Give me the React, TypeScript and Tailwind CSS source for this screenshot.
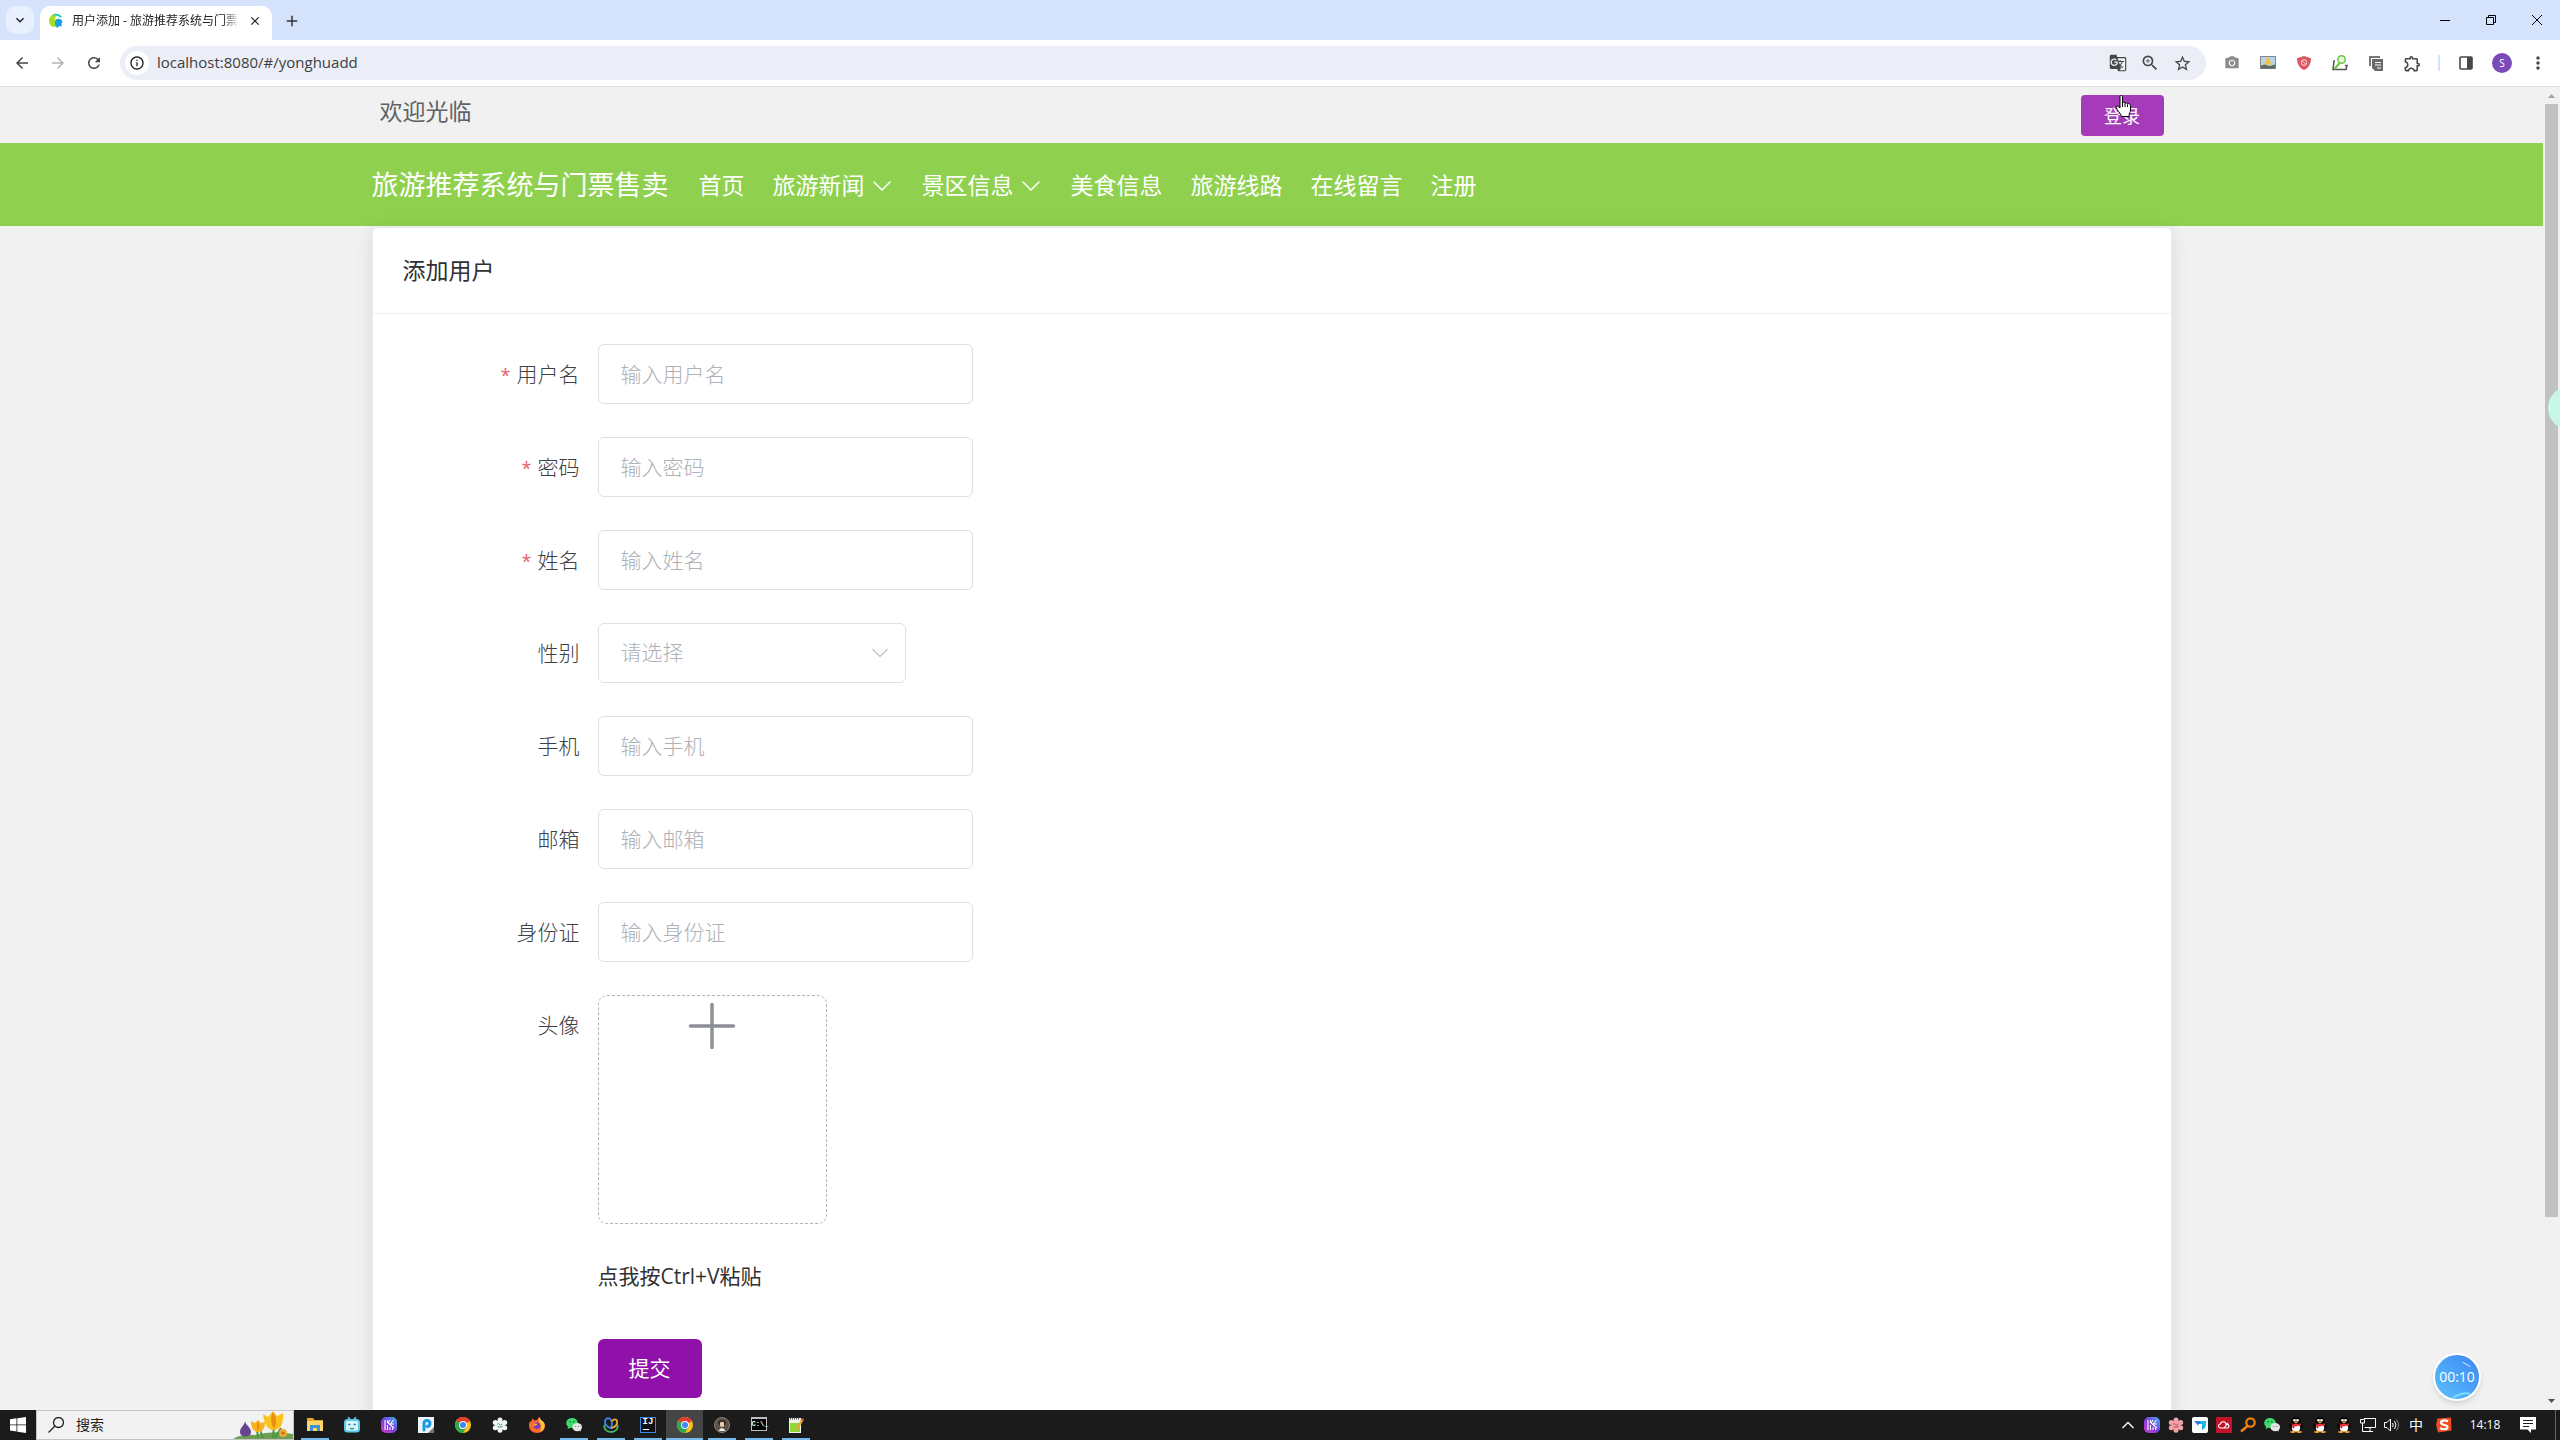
import type { ReactNode } from 'react'
import {
  MdArrowBack,
  MdArrowForward,
  MdClose,
  MdExpandMore,
  MdGTranslate,
  MdInfoOutline,
  MdMoreVert,
  MdOutlineExtension,
  MdPhotoCamera,
  MdRefresh,
  MdStarBorder,
  MdZoomIn,
  MdAdd,
} from 'react-icons/md'

/* ---------- data ---------- */

const menus = [
  { title: '首页' },
  { title: '旅游新闻', children: true },
  { title: '景区信息', children: true },
  { title: '美食信息' },
  { title: '旅游线路' },
  { title: '在线留言' },
  { title: '注册' },
]

type Field = { name: string; label: string; required?: boolean; type?: string }

const fields: Field[] = [
  { name: 'yonghuming', label: '用户名', required: true },
  { name: 'mima', label: '密码', required: true, type: 'password' },
  { name: 'xingming', label: '姓名', required: true },
  { name: 'xingbie', label: '性别', type: 'select' },
  { name: 'shouji', label: '手机' },
  { name: 'youxiang', label: '邮箱' },
  { name: 'shenfenzheng', label: '身份证' },
]

/* ---------- small drawings ---------- */

function Chevron({ className }: { className: string }) {
  return (
    <svg viewBox="0 0 18 18" className={className} fill="none" stroke="currentColor" strokeWidth="1.5">
      <path d="M1 5l8 8 8-8" strokeLinecap="round" />
    </svg>
  )
}

function ChromeLogo() {
  return (
    <svg viewBox="0 0 16 16" className="size-4">
      <circle cx="8" cy="8" r="8" fill="#fbc116" />
      <path d="M8 8L1.1 4A8 8 0 0 1 14.9 4z" fill="#e33b2e" />
      <path d="M8 8L1.1 4A8 8 0 0 0 8 16l3.5-6z" fill="#2da94f" />
      <circle cx="8" cy="8" r="3.9" fill="#fff" />
      <circle cx="8" cy="8" r="3" fill="#4285f4" />
    </svg>
  )
}

function WechatLogo() {
  return (
    <svg viewBox="0 0 16 16" className="size-4">
      <ellipse cx="6" cy="6" rx="5.8" ry="5" fill="#3ddc6b" />
      <path d="M2 9l-.3 3L5 10.5z" fill="#3ddc6b" />
      <circle cx="4.2" cy="4.8" r=".8" fill="#17552b" />
      <circle cx="7.8" cy="4.8" r=".8" fill="#17552b" />
      <ellipse cx="11.2" cy="10.2" rx="4.8" ry="4.1" fill="#e6e6e6" />
      <path d="M13 13l1.6 1.8.2-3z" fill="#e6e6e6" />
      <circle cx="9.7" cy="9.3" r=".6" fill="#666" />
      <circle cx="12.7" cy="9.3" r=".6" fill="#666" />
    </svg>
  )
}

function PurpleLogo() {
  return (
    <svg viewBox="0 0 16 16" className="size-4">
      <defs>
        <linearGradient id="pl" x1="0" y1="1" x2="1" y2="0">
          <stop offset="0" stopColor="#d63cc8" />
          <stop offset=".5" stopColor="#7a3fe0" />
          <stop offset="1" stopColor="#38b6f5" />
        </linearGradient>
      </defs>
      <rect width="16" height="16" rx="5" fill="url(#pl)" />
      <path d="M4 3v10M6.5 3v3M6.5 8v5M9 10v3M11.5 11v2M6 5l7 6M9 3l-1.500 2.500M12.500 3L9 7.500M13 7h-3" stroke="#fff" strokeWidth="1.100" fill="none" />
    </svg>
  )
}

function Flower({ color, heart }: { color: string; heart: string }) {
  return (
    <svg viewBox="0 0 16 16" className="size-4">
      <g fill={color}>
        <circle cx="8" cy="3" r="2.500" />
        <circle cx="12.700" cy="5.400" r="2.500" />
        <circle cx="12.700" cy="10.700" r="2.500" />
        <circle cx="8" cy="13.200" r="2.500" />
        <circle cx="3.300" cy="10.700" r="2.500" />
        <circle cx="3.300" cy="5.400" r="2.500" />
        <circle cx="8" cy="8" r="4.800" />
      </g>
      <path d="M5 7.500q1.500-2 2.500 0t3-.5M5.500 9.500q2.500 1.500 5 0" stroke={heart} fill="none" />
    </svg>
  )
}

function Penguin() {
  return (
    <svg viewBox="0 0 16 16" className="size-4">
      <path d="M8 0c3 0 4.400 2 4.400 5 2 2.500 2.800 4.600 2.300 6.400-.5 0-1-.5-1.500-1.200C13 13.500 11 15 8 15s-5-1.500-5.200-4.800c-.5.700-1 1.200-1.500 1.200C.8 9.600 1.600 7.500 3.600 5 3.600 2 5 0 8 0z" fill="#050505" />
      <ellipse cx="8" cy="10.800" rx="4.200" ry="4" fill="#fff" />
      <circle cx="6.500" cy="3.200" r="1.300" fill="#fff" />
      <circle cx="9.500" cy="3.200" r="1.300" fill="#fff" />
      <ellipse cx="8" cy="5.300" rx="2.200" ry=".8" fill="#f5a623" />
      <path d="M3.200 6.300q4.800 2 9.600 0l.3 1.700q-4 1.600-6.600 1.300L6 11.500l-1.800-.5.200-2.300z" fill="#e0202e" />
      <ellipse cx="4.800" cy="15" rx="2.800" ry="1" fill="#f5a623" />
      <ellipse cx="11.200" cy="15" rx="2.800" ry="1" fill="#f5a623" />
    </svg>
  )
}

/* ---------- browser chrome ---------- */

function TabStrip() {
  return (
    <div className="flex h-10 shrink-0 items-end bg-[#d5e2fb]">
      <button aria-label="搜索标签页" className="mb-1.5 ml-1.5 flex size-7 items-center justify-center rounded-[10px] bg-[#e9f0fd] text-[#1f1f1f]">
        <MdExpandMore className="size-4" />
      </button>
      <div className="ml-1.5 flex h-[34px] w-[232px] items-center rounded-t-[10px] bg-white pb-1 pl-2">
        <svg viewBox="0 0 16 16" className="size-4 shrink-0">
          <path d="M3 3a6.500 6.500 0 0 0 2 10.800c2 .8 4-.3 3.500-2.500C7.500 8 6 5 9 2 6.500.5 4.500 1.300 3 3z" fill="#a6e024" />
          <path d="M4 2.500C7-.5 12 .5 14 4l-2 .5C10 2.500 7 2 4 2.500z" fill="#1fc9b4" />
          <path d="M8 6.500c2.500-1.500 6-.5 6.500 2.500l-1 1.500.3 3-2.800-.5-1.500 2c-2.500-2-3.500-6-1.500-8.500z" fill="#1c9fe0" />
        </svg>
        <span className="ml-2 w-[168px] whitespace-nowrap text-xs text-[#1f1f1f] [mask-image:linear-gradient(to_right,black_90%,transparent)]">
          用户添加 - 旅游推荐系统与门票
        </span>
        <button aria-label="关闭标签页" className="ml-2 text-[#1f1f1f]">
          <MdClose className="size-3.5" />
        </button>
      </div>
      <button aria-label="新标签页" className="mb-2.5 ml-[11px] text-[#303236]">
        <MdAdd className="size-[18px]" />
      </button>
      <div className="mb-1 ml-auto flex h-8 text-black">
        <button aria-label="最小化" className="flex w-[46px] items-center justify-center">
          <svg viewBox="0 0 10 10" className="size-2.5" stroke="currentColor">
            <path d="M0 5.500h10" />
          </svg>
        </button>
        <button aria-label="还原" className="flex w-[46px] items-center justify-center">
          <svg viewBox="0 0 10 10" className="size-2.5" fill="none" stroke="currentColor">
            <path d="M.5 2.500h7v7h-7zM2.500 2.500v-2h7v7h-2" />
          </svg>
        </button>
        <button aria-label="关闭" className="flex w-[46px] items-center justify-center">
          <svg viewBox="0 0 10 10" className="size-2.5" stroke="currentColor">
            <path d="M0 0l10 10M10 0L0 10" />
          </svg>
        </button>
      </div>
    </div>
  )
}

function ToolButton({ label, children }: { label: string; children: ReactNode }) {
  return (
    <button aria-label={label} className="flex w-9 items-center justify-center">
      {children}
    </button>
  )
}

function Toolbar() {
  return (
    <div className="flex h-[47px] shrink-0 items-center border-b border-[#dcdee2] bg-white text-[#474747]">
      <div className="flex w-[120px] pl-1">
        <ToolButton label="后退"><MdArrowBack className="size-[18px]" /></ToolButton>
        <span className="flex text-[#b4b4b4]">
          <ToolButton label="前进"><MdArrowForward className="size-[18px]" /></ToolButton>
        </span>
        <ToolButton label="重新加载"><MdRefresh className="size-[18px]" /></ToolButton>
      </div>
      <div className="flex h-[34px] flex-1 items-center rounded-full bg-[#ebeef6] pr-2">
        <span className="ml-[5px] flex size-6 items-center justify-center rounded-full bg-white text-[#1f1f1f]">
          <MdInfoOutline className="size-4" />
        </span>
        <input
          aria-label="地址"
          defaultValue="localhost:8080/#/yonghuadd"
          className="ml-2 flex-1 bg-transparent pb-0.5 text-[15px] text-[#3c3f43] outline-none"
        />
        <button aria-label="翻译" className="w-8"><MdGTranslate className="mx-auto size-[18px]" /></button>
        <button aria-label="缩放" className="w-8"><MdZoomIn className="mx-auto size-5" /></button>
        <button aria-label="收藏" className="w-8"><MdStarBorder className="mx-auto size-[19px]" /></button>
      </div>
      <div className="flex w-[354px] pl-2">
        <ToolButton label="截图"><MdPhotoCamera className="size-4 text-[#8b8b8b]" /></ToolButton>
        <ToolButton label="图片下载">
          <svg viewBox="0 0 16 14" className="h-3.5 w-4">
            <rect x=".5" y=".5" width="15" height="12" fill="#b9d3ea" stroke="#888" />
            <path d="M1 9.500l4-1 5 1.500 5-1.500v4H1z" fill="#5b6b66" />
            <path d="M6.500 2h3v4h2.500L8 10 4 6h2.500z" fill="#f3c52c" />
          </svg>
        </ToolButton>
        <ToolButton label="广告拦截">
          <svg viewBox="0 0 14 14" className="size-3.5">
            <path d="M7 0l7 2.200C14 8 11.500 12 7 14 2.500 12 0 8 0 2.200z" fill="#dc5663" />
            <circle cx="7" cy="6.500" r="2.800" fill="none" stroke="#fbd5d8" />
            <path d="M5 4.500l4 4" stroke="#fbd5d8" />
          </svg>
        </ToolButton>
        <ToolButton label="搜索助手">
          <svg viewBox="0 0 16 16" className="size-4" fill="none">
            <path d="M3 6H2L1 14.500h13l1-4h-2" stroke="#555" strokeWidth="1.500" />
            <circle cx="9.500" cy="4.500" r="3.700" stroke="#6cc644" strokeWidth="1.500" fill="#e3f5dc" />
            <path d="M7.500 8L2.500 14" stroke="#6cc644" strokeWidth="2" />
          </svg>
        </ToolButton>
        <ToolButton label="复制助手">
          <svg viewBox="0 0 16 16" className="size-4">
            <path d="M1 11V1h11v2H3v8z" fill="#777" />
            <path d="M4 4h11v12H7l-3-3z" fill="#6a6a6a" />
            <path d="M7 7.500h6M7 10h6M9 13h4" stroke="#fff" strokeWidth="1.200" />
          </svg>
        </ToolButton>
        <ToolButton label="扩展程序"><MdOutlineExtension className="size-[19px]" /></ToolButton>
        <span className="ml-2 mr-2 h-4 w-0.5 self-center bg-[#d5e2fb]" />
        <ToolButton label="侧边栏">
          <svg viewBox="0 0 14 14" className="size-3.5">
            <rect x="1" y="1" width="12" height="12" rx="1" fill="none" stroke="#474747" strokeWidth="1.600" />
            <path d="M8 1h5v12H8z" fill="#474747" />
          </svg>
        </ToolButton>
        <ToolButton label="个人资料">
          <span className="flex size-5 items-center justify-center rounded-full bg-[#7a4bb8] text-[10px] text-white">S</span>
        </ToolButton>
        <ToolButton label="更多"><MdMoreVert className="size-5" /></ToolButton>
      </div>
    </div>
  )
}

/* ---------- page ---------- */

function TopBar() {
  return (
    <div className="mx-auto flex h-14 w-full max-w-[1800px] items-start justify-between px-2 pt-2">
      <span className="text-[23px] leading-8 text-[#606266]">欢迎光临</span>
      <div className="relative">
        <button className="h-[41px] w-[83px] rounded bg-[#a53bb9] text-lg text-white">登录</button>
        <svg viewBox="0 0 17 22" className="absolute left-[34px] top-0 h-[22px] w-[17px]">
          <path
            d="M5 1.500c0-1.300 2.500-1.300 2.500 0V8l1-.8c1 0 1.500.4 1.500 1.200l1-.6c1 0 1.500.5 1.500 1.300l.8-.5c1.200 0 2.200.8 2.200 2V15c0 2-1.500 3-1.500 6.500H6.500C6 18.500 1 14.500 1 12c0-1.500 2-1.500 4 1z"
            fill="#fff"
            stroke="#000"
          />
          <path d="M7.500 8v4M10 8.500V12M12.500 9.500V12" stroke="#000" />
        </svg>
      </div>
    </div>
  )
}

function NavBar() {
  return (
    <nav className="bg-[#8fd14f] text-white">
      <div className="mx-auto flex h-[83px] w-full max-w-[1800px] items-center pt-0.5">
        <h1 className="whitespace-nowrap text-[27px]">旅游推荐系统与门票售卖</h1>
        <ul className="ml-4 flex text-[23px]">
          {menus.map((item) => (
            <li key={item.title}>
              <a href="#/" className="flex items-center whitespace-nowrap px-3.5">
                {item.title}
                {item.children && <Chevron className="ml-2 mr-[3px] size-[18px]" />}
              </a>
            </li>
          ))}
        </ul>
      </div>
    </nav>
  )
}

const boxClass =
  'h-[60px] rounded-md border border-[#dddfe3] bg-white px-[22px] text-[21px] font-light text-[#606266] outline-none placeholder:text-[#aeb1b6]'

const labelClass = 'w-[225px] shrink-0 pr-[18px] text-right text-[21px] font-light leading-[60px] text-[#3e4044]'

function FormField({ field }: { field: Field }) {
  return (
    <div className="flex">
      <label htmlFor={field.name} className={labelClass}>
        {field.required && <span className="mr-1.5 text-lg font-normal text-[#e4606d]">*</span>}
        {field.label}
      </label>
      {field.type === 'select' ? (
        <div className="relative">
          <select id={field.name} className={`${boxClass} w-[308px] appearance-none text-[#aeb1b6]`}>
            <option>请选择</option>
            <option>男</option>
            <option>女</option>
          </select>
          <Chevron className="pointer-events-none absolute right-[18px] top-[22px] size-4 text-[#c0c4cc]" />
        </div>
      ) : (
        <input id={field.name} type={field.type ?? 'text'} placeholder={`输入${field.label}`} className={`${boxClass} w-[375px]`} />
      )}
    </div>
  )
}

function UserForm() {
  return (
    <section className="mx-auto mt-px w-full max-w-[1800px] rounded-md border border-[#ebeef5] bg-white shadow-[0_3px_18px_rgba(0,0,0,0.1)]">
      <h2 className="border-b border-[#ebeef5] px-[30px] pb-[26px] pt-[25px] text-[23px] leading-[34px] text-[#303133]">添加用户</h2>
      <form className="flex flex-col gap-[33px] pb-12 pt-[30px]">
        {fields.map((field) => (
          <FormField key={field.name} field={field} />
        ))}
        <div className="flex">
          <label htmlFor="touxiang" className={labelClass}>
            头像
          </label>
          <div>
            <label htmlFor="touxiang" className="flex size-[229px] justify-center rounded-[9px] border border-dashed border-[#b4b4b4] pt-1.5">
              <svg viewBox="0 0 48 48" className="size-12" stroke="#8c9096" strokeWidth="3.500" strokeLinecap="round">
                <path d="M24 2.500v43M2.500 24h43" />
              </svg>
              <input id="touxiang" type="file" className="sr-only" />
            </label>
            <p className="mt-[22px] text-[21px] leading-[60px] text-[#303133]">点我按Ctrl+V粘贴</p>
          </div>
        </div>
        <div className="flex pl-[225px]">
          <button type="button" className="h-[59px] w-[104px] rounded-md bg-[#9010aa] text-[21px] text-white">
            提交
          </button>
        </div>
      </form>
    </section>
  )
}

function ScrollBar() {
  return (
    <div className="flex w-[17px] shrink-0 flex-col items-center bg-[#f1f1f1]">
      <svg viewBox="0 0 17 17" className="size-[17px] shrink-0">
        <path d="M5 11h7L8.500 7z" fill="#a3a3a3" />
      </svg>
      <div className="flex w-full flex-1 flex-col px-0.5">
        <div className="flex-[19] bg-[#c1c1c1]" />
        <div className="flex-[3]" />
      </div>
      <svg viewBox="0 0 17 17" className="size-[17px] shrink-0">
        <path d="M5 6h7l-3.500 4z" fill="#505050" />
      </svg>
    </div>
  )
}

/* ---------- task bar ---------- */

function Pin({ label, open, active, children }: { label: string; open?: boolean; active?: boolean; children: ReactNode }) {
  return (
    <button
      aria-label={label}
      className={`flex w-[37px] flex-col items-center pt-[7px] ${active ? 'bg-[#454545]' : ''}`}
    >
      {children}
      {open && <span className={`mt-auto h-0.5 bg-[#76b9ed] ${active ? 'w-full' : 'w-7'}`} />}
    </button>
  )
}

function Tray({ label, children }: { label: string; children: ReactNode }) {
  return (
    <button aria-label={label} className="flex w-6 items-center justify-center">
      {children}
    </button>
  )
}

function TaskBar() {
  return (
    <footer className="flex h-[30px] shrink-0 bg-[#1b1b1b] text-white">
      <button aria-label="开始" className="flex w-9 items-center justify-center">
        <svg viewBox="0 0 16 16" className="size-4" fill="#fff">
          <path d="M0 2.200l6.500-.9v6.200H0zM7.300 1.200L16 0v7.500H7.300zM0 8.300h6.500v6.200L0 13.600zM7.300 8.300H16V16l-8.700-1.300z" />
        </svg>
      </button>
      <div className="flex w-[258px] items-center border border-[#c5c5c5] bg-[#f2f2f2] pl-[11px]">
        <svg viewBox="0 0 16 16" className="size-4 shrink-0" fill="none" stroke="#222" strokeWidth="1.300">
          <circle cx="10.500" cy="5.500" r="5" />
          <path d="M7 9l-6.500 6.500" />
        </svg>
        <input aria-label="搜索" placeholder="搜索" className="ml-3 w-[120px] bg-transparent text-sm outline-none placeholder:text-[#222]" />
        <svg viewBox="0 0 60 28" className="ml-auto h-7 w-[60px] shrink-0">
          <path d="M0 28q8-5 22-4 18-5 38-1v5z" fill="#6f9f52" />
          <path d="M25 27l-1-9M40 27l1-12M42 27l6-10M30 27l-3-8" stroke="#4c9440" strokeWidth="2" />
          <path d="M12 10c0 4-5 6-5 11 0 6 11 6 11 0 0-5-5-6-6-11z" fill="#67448f" />
          <path d="M18 10l4 2 3-3 3 3 4-1c0 6-2 10-7 10s-7-5-7-11z" fill="#f7b51c" />
          <path d="M30 3l5 3 5-6 4 5 6-3c1 9-2 17-9 17S31 12 30 3z" fill="#fbc21f" />
          <path d="M40 1c-3 6-2 12 1 17 3-5 3-11-1-17zM25 10c-2 4-1 8 0 10 2-3 2-6 0-10z" fill="#ef8d12" />
          <circle cx="50" cy="22" r="4" fill="#f0a93a" />
          <circle cx="50" cy="22" r="1.500" fill="#b86a17" />
        </svg>
      </div>
      <div className="flex pl-0.5">
        <Pin label="文件资源管理器" open>
          <svg viewBox="0 0 16 16" className="size-4">
            <path d="M0 1h6l1.500 2H16v11H0z" fill="#e3a92d" />
            <path d="M0 4h16v10H0z" fill="#fcd869" />
            <path d="M3 14V8h10v6h-3v-3H6v3z" fill="#3e93d6" />
          </svg>
        </Pin>
        <Pin label="哔哩哔哩">
          <svg viewBox="0 0 16 16" className="size-4" fill="none">
            <path d="M4 0l2.500 3M12 0L9.500 3" stroke="#63cdea" strokeWidth="1.500" />
            <rect x="1" y="3" width="14" height="11.500" rx="2.500" fill="#d9f5fc" stroke="#5cc8e8" strokeWidth="2" />
            <path d="M4 7.500h2.500M9.500 7.500H12M6 11q2 1.500 4 0" stroke="#2d8fb0" strokeWidth="1.300" />
          </svg>
        </Pin>
        <Pin label="录屏"><PurpleLogo /></Pin>
        <Pin label="PicPick">
          <svg viewBox="0 0 16 16" className="size-4">
            <path d="M0 0h16v16H0z" fill="#e9f4fb" />
            <path d="M10 16h6v-6z" fill="#777" />
            <path d="M6 13V6a3 3 0 1 1 3 3.500" fill="none" stroke="#1e9be6" strokeWidth="3" strokeLinecap="round" />
          </svg>
        </Pin>
        <Pin label="Chrome"><ChromeLogo /></Pin>
        <Pin label="工具"><Flower color="#f4f6f2" heart="#3a9a8f" /></Pin>
        <Pin label="Firefox">
          <svg viewBox="0 0 16 16" className="size-4">
            <path d="M1 4c0 1 .5 1 1 .5L4 1l1 2.500 3-.5 2-3 2 3c3 1.500 4 4 4 6a8 7 0 0 1-16 0c0-2 .3-3.500 1-5z" fill="#ff6a2b" />
            <path d="M10 0l2.500 3.500C15 5 16 7 15.500 10c-1 3-3 4.500-5 5 3-4 2-8-.5-10z" fill="#ffc933" />
            <circle cx="8" cy="8.800" r="3.300" fill="#7a3cc4" />
            <path d="M4 7q3-1 4 0t-3 2z" fill="#ffb02e" />
          </svg>
        </Pin>
        <Pin label="微信" open><WechatLogo /></Pin>
        <Pin label="Navicat" open>
          <svg viewBox="0 0 16 16" className="size-4" fill="none" strokeWidth="1.900">
            <path d="M2 7.500c-2 4 1.500 7.500 6 7.500s8-3.500 6-7.500" stroke="#45b564" />
            <path d="M8 11C3 10 1 6 2.500 3c1.500-3 5-2 6 1 .8 2.500.5 5-.5 7z" stroke="#3c7de0" />
            <path d="M8 11c4.500-.5 7-4 6-7-1-2.500-4-2-5 .5" stroke="#f0a72d" />
          </svg>
        </Pin>
        <Pin label="IntelliJ IDEA" open>
          <span className="flex size-4 flex-col items-start border border-[#3d86e0] bg-[#101018] pl-0.5 font-mono text-[9px] font-bold leading-[9px]">
            IJ
            <span className="mt-0.5 h-px w-1.5 bg-white" />
          </span>
        </Pin>
        <Pin label="Chrome" open active><ChromeLogo /></Pin>
        <Pin label="头像" open>
          <svg viewBox="0 0 16 16" className="size-4">
            <circle cx="8" cy="8" r="7.500" fill="#5b5148" stroke="#8a8178" />
            <path d="M4 5q4-4 8 0l-1 3H5z" fill="#2c2622" />
            <path d="M6 5.500q2-1.500 4 0V9q-2 2-4 0z" fill="#e6c9b0" />
            <path d="M4.500 14q3.500-6 7 0z" fill="#f0eeea" />
          </svg>
        </Pin>
        <Pin label="命令提示符" open>
          <span className="flex h-3.5 w-4 items-center border border-t-2 border-[#bdbdbd] bg-black font-mono text-[7px] font-bold leading-none">C:\_</span>
        </Pin>
        <Pin label="Notepad++" open>
          <svg viewBox="0 0 16 16" className="size-4">
            <path d="M1 1h12v15H1z" fill="#f3f3ee" />
            <path d="M2 6h10v9H2z" fill="#8fd83b" />
            <path d="M2 1.500h10" stroke="#555" strokeDasharray="1 1" strokeWidth="2" />
            <path d="M14 1l2 1.500L10 12l-2.500 1.500L8 11z" fill="#e8a33a" />
            <path d="M14 1l2 1.500-1 1.500-2-1.300z" fill="#c8402f" />
          </svg>
        </Pin>
      </div>
      <div className="ml-auto flex">
        <Tray label="显示隐藏的图标">
          <svg viewBox="0 0 12 8" className="h-2 w-3" fill="none" stroke="#fff" strokeWidth="1.300">
            <path d="M.5 7L6 1.500 11.500 7" />
          </svg>
        </Tray>
        <Tray label="录屏"><PurpleLogo /></Tray>
        <Tray label="花瓣"><Flower color="#f0a3a8" heart="#b7415a" /></Tray>
        <Tray label="ToDesk">
          <svg viewBox="0 0 16 16" className="size-4">
            <rect width="16" height="16" rx="2" fill="#fff" />
            <path d="M2 4h7v3H6.500v2z" fill="#2c7df0" />
            <path d="M8 4h6v3c0 3-1.500 5-4 6V7H8z" fill="#1fb6e8" />
          </svg>
        </Tray>
        <Tray label="云服务">
          <svg viewBox="0 0 16 16" className="size-4" fill="none">
            <rect width="16" height="16" rx="1" fill="#c4122b" />
            <path d="M4.500 11a2 2 0 0 1 0-4c.5-3 5-3 5.500 0 3-.8 4 4 1 4zM8 11l4-5" stroke="#fff" strokeWidth="1.200" />
          </svg>
        </Tray>
        <Tray label="Everything">
          <svg viewBox="0 0 16 16" className="size-4" fill="none" stroke="#ee7f10">
            <circle cx="10.500" cy="5.500" r="4.200" strokeWidth="2.200" />
            <path d="M7.500 9L1 14.500" strokeWidth="2.600" />
          </svg>
        </Tray>
        <Tray label="微信"><WechatLogo /></Tray>
        <Tray label="QQ"><Penguin /></Tray>
        <Tray label="QQ"><Penguin /></Tray>
        <Tray label="QQ"><Penguin /></Tray>
        <Tray label="网络">
          <svg viewBox="0 0 16 14" className="h-3.5 w-4" fill="none" stroke="#fff">
            <path d="M4 .5h11.500v9H4.500M10 9.500v3.500M6 13.500h7M2.500 5v8.500H6M.5 1.500h4v3.500h-4z" />
          </svg>
        </Tray>
        <Tray label="音量">
          <svg viewBox="0 0 16 14" className="h-3.5 w-4" fill="none" stroke="#fff">
            <path d="M.5 4.500h2.500L6.500 1v12L3 9.500H.5zM8.500 5q1.500 2 0 4M10.500 3q3 4 0 8" />
            <path d="M12.500 1.500q4 5.500 0 11" stroke="#888" />
          </svg>
        </Tray>
        <button aria-label="输入法" className="flex w-6 items-center justify-center text-sm">中</button>
        <button aria-label="搜狗输入法" className="flex w-8 items-center justify-center">
          <svg viewBox="0 0 16 16" className="size-4">
            <path d="M1.500 1.500L15 .5l.5 13L2 15.500 0 8z" fill="#ee4b22" />
            <path d="M12 4.500C9 2.500 4.500 3.500 5 6s6.500 1.500 6.500 4-4.500 3-7.500 1" fill="none" stroke="#fff" strokeWidth="2.200" />
          </svg>
        </button>
        <time className="flex w-[50px] items-center justify-center text-xs">14:18</time>
        <button aria-label="通知" className="flex w-[45px] items-center justify-center pr-2.5">
          <svg viewBox="0 0 16 16" className="size-4">
            <path d="M0 0h16v12.500h-5V16l-3.500-3.500H0z" fill="#fff" />
            <path d="M3 3.500h10M3 6.500h10M3 9.500h6" stroke="#1b1b1b" />
          </svg>
        </button>
        <span className="mr-1 w-px bg-[#666]" />
      </div>
    </footer>
  )
}

export default function App() {
  return (
    <div className="flex h-screen flex-col overflow-hidden font-['Open_Sans','Noto_Sans_CJK_SC',sans-serif]">
      <TabStrip />
      <Toolbar />
      <div className="relative flex min-h-0 flex-1 overflow-hidden">
        <main className="flex-1 overflow-hidden bg-[#f1f1f1]">
          <TopBar />
          <NavBar />
          <UserForm />
        </main>
        <ScrollBar />
        {/* floating desktop widgets */}
        <div className="absolute bottom-[9px] right-[79px] flex size-12 items-center justify-center rounded-full border-2 border-white bg-linear-to-tr from-[#5cc0fb] to-[#3f86f3] text-sm text-white shadow-md">
          00:10
          <svg viewBox="0 0 44 44" className="absolute inset-0" fill="none" stroke="#d4f0ff" strokeLinecap="round">
            <path d="M28 7.500l7 4" />
            <path d="M19 42q9-5 15-3.500" stroke="#7fe0fb" strokeWidth="2" />
          </svg>
        </div>
        <div className="absolute -right-8 top-[299px] size-11 rounded-full bg-[#c8f7ea]" />
      </div>
      <TaskBar />
    </div>
  )
}
